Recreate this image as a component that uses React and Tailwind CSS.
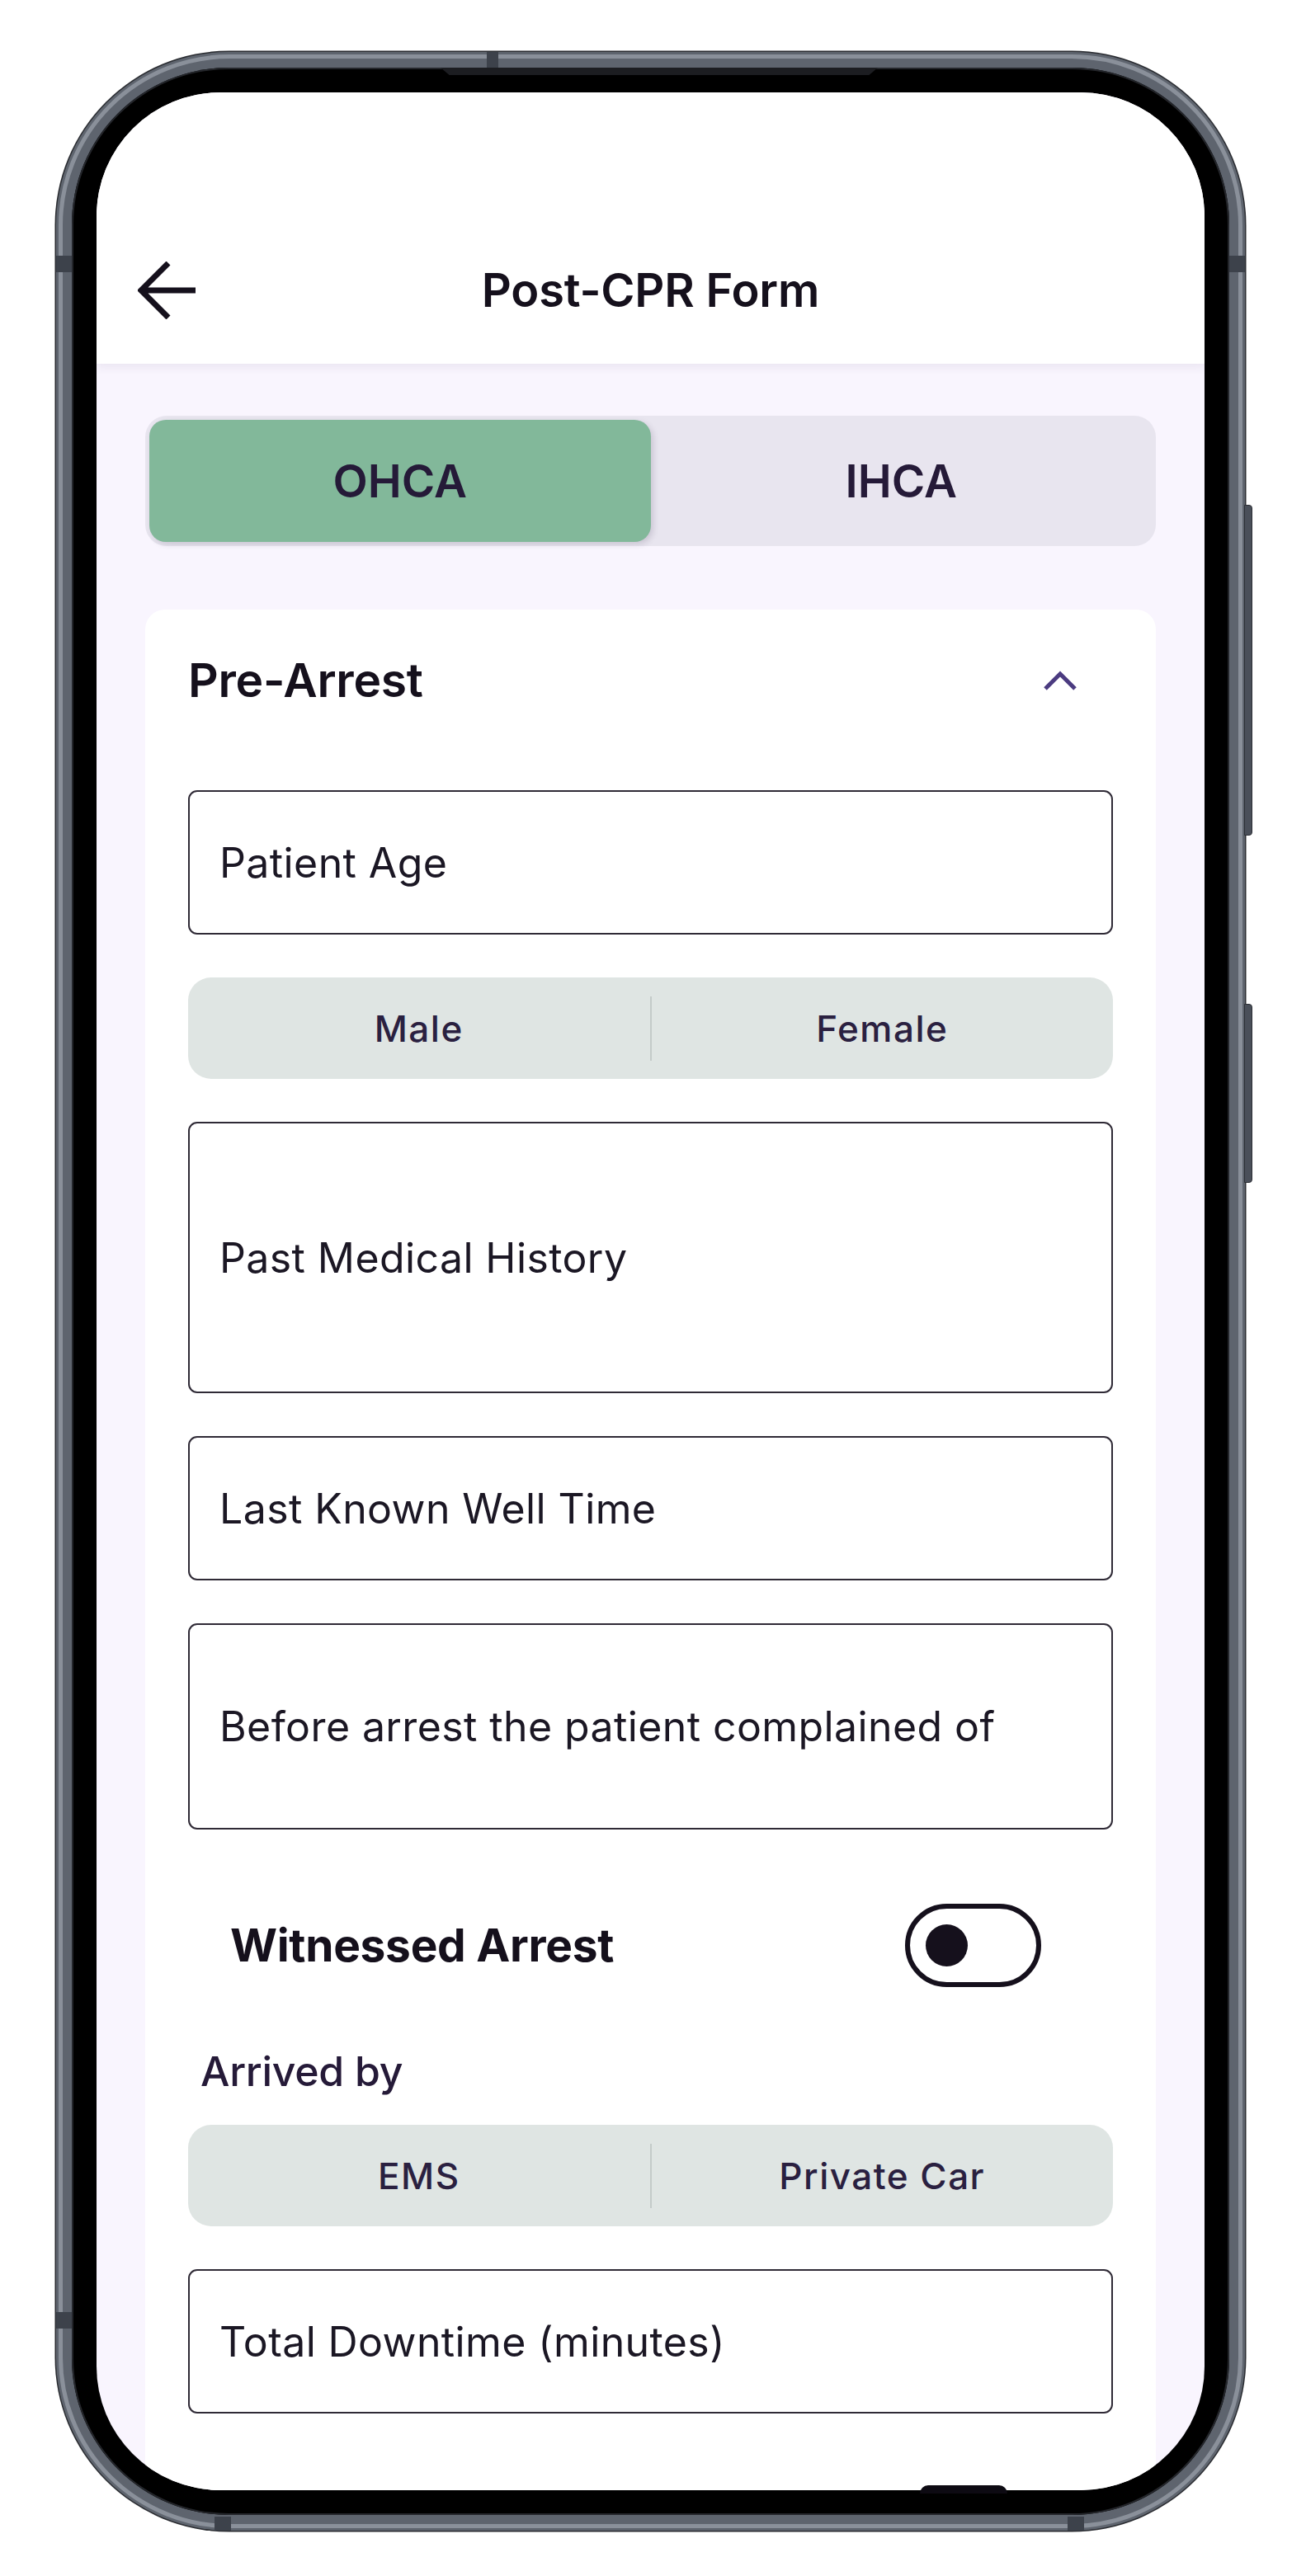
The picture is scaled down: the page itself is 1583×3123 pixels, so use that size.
import React, { useState } from 'react';

function BackArrow() {
  return (
    <svg width="70" height="70" viewBox="0 0 70 70" fill="none">
      <path d="M70 35H4M37 2L4 35l33 33" stroke="#15101c" strokeWidth="7" />
    </svg>
  );
}

function ChevronUp() {
  return (
    <svg width="40" height="24" viewBox="0 0 40 24" fill="none">
      <path d="M2 22L20 4l18 18" stroke="#4b3b80" strokeWidth="5" />
    </svg>
  );
}

function TextField({ label, height }) {
  return (
    <div
      className={`${height} w-full flex items-center rounded-[11px] border-[2.5px] border-[#2f2a36] bg-white pl-[36px]`}
    >
      <span className="text-[50px] tracking-[0.4px] text-[#1b1724] leading-none">{label}</span>
    </div>
  );
}

function Choice({ left, right }) {
  return (
    <div className="h-[123px] w-full flex items-center rounded-[28px] bg-[#dfe5e3]">
      <div className="flex-1 text-center text-[44px] font-medium tracking-[1.5px] text-[#2a2040]">{left}</div>
      <div className="w-[2px] h-[78px] bg-[#c4cbc9]" />
      <div className="flex-1 text-center text-[44px] font-medium tracking-[1.5px] text-[#2a2040]">{right}</div>
    </div>
  );
}

export default function App() {
  const [mode, setMode] = useState('OHCA');
  const [witnessed, setWitnessed] = useState(false);

  return (
    <div className="w-[1583px] h-[3123px] bg-white font-['Inter',sans-serif] pt-[63px] pl-[68px]">
      {/* phone body */}
      <div className="relative w-[1441px] h-[3005px] rounded-[210px] bg-[#5e646e] p-[3px] shadow-[0_0_0_1.5px_#2a2c31]">
        {/* side buttons */}
        <div className="absolute -right-[9px] top-[549px] w-[10px] h-[401px] rounded-r-[4px] bg-[#4a4f59] border border-[#2c2f35]" />
        <div className="absolute -right-[9px] top-[1154px] w-[10px] h-[217px] rounded-r-[4px] bg-[#4a4f59] border border-[#2c2f35]" />
        {/* antenna marks */}
        <div className="absolute top-0 left-[522px] w-[14px] h-[20px] bg-[#3d424b]" />
        <div className="absolute left-0 top-[247px] w-[20px] h-[20px] bg-[#3d424b]" />
        <div className="absolute right-0 top-[247px] w-[20px] h-[20px] bg-[#3d424b]" />
        <div className="absolute left-0 top-[2740px] w-[20px] h-[20px] bg-[#3d424b]" />
        <div className="absolute bottom-0 left-[192px] w-[20px] h-[17px] bg-[#3d424b]" />
        <div className="absolute bottom-0 right-[195px] w-[20px] h-[17px] bg-[#3d424b]" />

        <div className="w-full h-full rounded-[207px] border-[5px] border-[#8a909a] bg-[#5e646e] p-[11px]">
          {/* bezel */}
          <div className="relative w-full h-full rounded-[190px] bg-black p-[30px] shadow-[inset_0_0_0_2px_#24262b]">
            <div className="absolute top-[0px] left-[447px] w-[530px] h-[9px] bg-[#1c1d21] [clip-path:polygon(0_0,100%_0,98%_100%,2%_100%)]" />
            {/* screen */}
            <div className="relative w-full h-full rounded-[150px] overflow-hidden bg-[#f9f5fe] flex flex-col">
              <header className="relative z-10 h-[329px] shrink-0 bg-white shadow-[0_5px_10px_rgba(60,40,90,0.07)] grid grid-cols-[1fr_auto_1fr] items-center pt-[150px] px-[50px]">
                <button className="w-[70px] h-[70px]">
                  <BackArrow />
                </button>
                <h1 className="text-[56px] font-semibold text-[#15101c] tracking-[-0.2px]">Post-CPR Form</h1>
                <div />
              </header>

              <main className="flex-1 flex flex-col px-[59px] pt-[63px]">
                <div className="h-[158px] shrink-0 flex rounded-[26px] bg-[#e8e5ef] p-[5px]">
                  {['OHCA', 'IHCA'].map(m => (
                    <button
                      key={m}
                      onClick={() => setMode(m)}
                      className={`flex-1 rounded-[20px] text-[55px] font-semibold text-[#251a38] ${mode === m ? 'bg-[#82b89a] shadow-[3px_3px_7px_rgba(40,30,60,0.15)]' : ''}`}
                    >
                      {m}
                    </button>
                  ))}
                </div>

                <section className="mt-[77px] flex-1 rounded-t-[24px] bg-white px-[52px] pt-[38px]">
                  <div className="h-[96px] flex items-center justify-between">
                    <h2 className="text-[57px] font-semibold text-[#15101c] tracking-[-0.3px]">Pre-Arrest</h2>
                    <div className="mr-[44px] flex items-center">
                      <ChevronUp />
                    </div>
                  </div>

                  <div className="mt-[85px] flex flex-col gap-[52px]">
                    <TextField label="Patient Age" height="h-[175px]" />
                    <Choice left="Male" right="Female" />
                    <TextField label="Past Medical History" height="h-[329px]" />
                    <TextField label="Last Known Well Time" height="h-[175px]" />
                    <TextField label="Before arrest the patient complained of" height="h-[250px]" />
                  </div>

                  <div className="mt-[90px] flex items-center justify-between pl-[51px] pr-[87px]">
                    <span className="text-[55px] font-bold text-[#15101c] tracking-[-0.3px]">Witnessed Arrest</span>
                    <button
                      onClick={() => setWitnessed(w => !w)}
                      className={`w-[165px] h-[101px] rounded-full border-[6px] border-[#15101c] flex items-center px-[19px] ${witnessed ? 'justify-end' : 'justify-start'}`}
                    >
                      <span className="w-[51px] h-[51px] rounded-full bg-[#15101c]" />
                    </button>
                  </div>

                  <div className="mt-[77px] pl-[15px] text-[50px] leading-none font-medium text-[#251a38] tracking-[-0.3px]">Arrived by</div>

                  <div className="mt-[40px] flex flex-col gap-[52px]">
                    <Choice left="EMS" right="Private Car" />
                    <TextField label="Total Downtime (minutes)" height="h-[175px]" />
                  </div>
                </section>
              </main>
            </div>
            <div className="absolute bottom-[26px] left-[1028px] w-[106px] h-[10px] rounded-t-full bg-[#0d0a12]" />
          </div>
        </div>
      </div>
    </div>
  );
}
